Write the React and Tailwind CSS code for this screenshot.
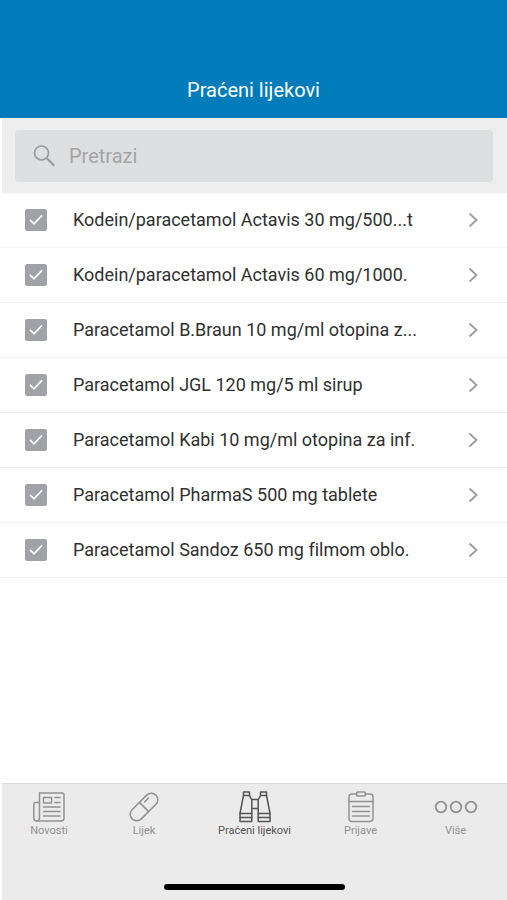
import React, { useState } from "react";

const MEDICINES = [
  "Kodein/paracetamol Actavis 30 mg/500...t",
  "Kodein/paracetamol Actavis 60 mg/1000.",
  "Paracetamol B.Braun 10 mg/ml otopina z...",
  "Paracetamol JGL 120 mg/5 ml sirup",
  "Paracetamol Kabi 10 mg/ml otopina za inf.",
  "Paracetamol PharmaS 500 mg tablete",
  "Paracetamol Sandoz 650 mg filmom oblo.",
];

const stroke = {
  fill: "none",
  stroke: "currentColor",
  strokeWidth: 1.5,
  strokeLinecap: "round",
  strokeLinejoin: "round",
  "aria-hidden": true,
};

function NewsIcon() {
  return (
    <svg className="h-8 w-8" viewBox="0 0 32 32" {...stroke}>
      <path d="M6.500 2h23a1.500 1.500 0 0 1 1.500 1.500V27a3 3 0 0 1-3 3H3.800a3 3 0 0 1-3-3V13a1.500 1.500 0 0 1 1.500-1.500h4.200" />
      <path d="M6.500 2v25a2.800 2.800 0 0 1-2.700 3" />
      <path d="M10.500 6.500h8v5.500h-8z" />
      <path d="M22 6.500h5M22 11.500h5M10.500 16h16.500M10.500 20.500h16.500M10.500 25h16.500" />
    </svg>
  );
}

function PillIcon() {
  return (
    <svg className="h-8 w-8" viewBox="0 0 32 32" {...stroke}>
      <g transform="rotate(-45 16 16)">
        <rect x="-0.800" y="9.500" width="33.600" height="13" rx="6.500" />
        <path d="M16 9.500v13M20 12.800h5.500" />
      </g>
    </svg>
  );
}

function BinocularsIcon() {
  return (
    <svg className="h-8 w-8" viewBox="0 0 32 32" {...stroke}>
      <path d="M4.500 1h6v3.500h-6zM21.500 1h6v3.500h-6z" />
      <path d="M4.500 4.500L3 12 1 22.500V30.500h11.800V9L10.500 4.500" />
      <path d="M27.500 4.500L29 12l2 10.500V30.500H19.200V9l2.300-4.500" />
      <path d="M1 22.500h11.800M19.200 22.500H31M1 26.500h11.800M19.200 26.500H31" />
      <path d="M12.800 8.500h6.400M12.800 17.500h6.400" />
    </svg>
  );
}

function ClipboardIcon() {
  return (
    <svg className="h-8 w-8" viewBox="0 0 32 32" {...stroke}>
      <path d="M12 3H7a3 3 0 0 0-3 3v21.500a3 3 0 0 0 3 3h18a3 3 0 0 0 3-3V6a3 3 0 0 0-3-3h-5" />
      <rect x="11.500" y="1" width="9" height="4" rx="1.500" />
      <path d="M4 10.500h24M7.500 15.500h17M7.500 20.500h17M7.500 25h17" />
    </svg>
  );
}

function MoreIcon() {
  return (
    <svg className="h-8 w-11" viewBox="0 0 44 32" {...stroke} strokeWidth={1.8}>
      <circle cx="7" cy="16" r="5.300" />
      <circle cx="22" cy="16" r="5.300" />
      <circle cx="37" cy="16" r="5.300" />
    </svg>
  );
}

const TABS = [
  { label: "Novosti", Icon: NewsIcon },
  { label: "Lijek", Icon: PillIcon },
  { label: "Praćeni lijekovi", Icon: BinocularsIcon, active: true },
  { label: "Prijave", Icon: ClipboardIcon },
  { label: "Više", Icon: MoreIcon },
];

function MedicineRow({ name }) {
  const [checked, setChecked] = useState(true);
  return (
    <li className="flex h-[55px] items-center border-b border-[#f3f3f3] pr-[29px] pl-[25px]">
      <label className="relative grid size-[22px] shrink-0 place-items-center">
        <input
          type="checkbox"
          aria-label={name}
          checked={checked}
          onChange={(e) => setChecked(e.target.checked)}
          className="peer size-[22px] appearance-none rounded-[2px] border border-[#a1a1a8] checked:bg-[#a1a1a8]"
        />
        <svg
          className="pointer-events-none absolute inset-0 hidden size-[22px] text-white peer-checked:block"
          viewBox="0 0 22 22"
          fill="none"
          stroke="currentColor"
          strokeWidth="1.700"
          aria-hidden="true"
        >
          <path d="M5 10.800l4 4 8-8.500" />
        </svg>
      </label>
      <button type="button" className="flex min-w-0 flex-1 items-center justify-between pl-[26px] text-left">
        <span className="truncate text-[18px] leading-6 text-[#303030] [font-variant-ligatures:none]">{name}</span>
        <svg
          className="h-4 w-[10px] shrink-0 text-[#9b9b9b]"
          viewBox="0 0 10 16"
          fill="none"
          stroke="currentColor"
          strokeWidth="1.800"
          aria-hidden="true"
        >
          <path d="M1.500 1.500L8.500 8l-7 6.500" />
        </svg>
      </button>
    </li>
  );
}

export default function App() {
  return (
    <div className="flex min-h-screen flex-col bg-white font-[Roboto,sans-serif]">
      <header className="bg-[#007cbb] pt-[76px] pb-[14px] text-center text-white">
        <h1 className="text-[20px] leading-7">Praćeni lijekovi</h1>
      </header>

      <main className="flex-1">
        <div className="ml-[2px] bg-[#eeeeee] pt-3 pr-[14px] pb-[11px] pl-[13px]">
          <label className="flex h-[52px] items-center gap-[14px] rounded-[4px] bg-[#dedfe1] pl-[18px]">
            <svg
              className="size-[22px] shrink-0 text-[#9b9b9b]"
              viewBox="0 0 22 22"
              fill="none"
              stroke="currentColor"
              strokeWidth="1.700"
              aria-hidden="true"
            >
              <circle cx="8.500" cy="8" r="7" />
              <path d="M13.300 12.800l8 8" strokeWidth="2.200" />
            </svg>
            <input
              type="search"
              aria-label="Pretrazi"
              placeholder="Pretrazi"
              className="min-w-0 flex-1 bg-transparent text-[20px] leading-7 text-[#303030] outline-none placeholder:text-[#a3a5a5]"
            />
          </label>
        </div>

        <ul>
          {MEDICINES.map((name) => (
            <MedicineRow key={name} name={name} />
          ))}
        </ul>
      </main>

      <nav className="ml-[2px] border-t border-[#dcdcdc] bg-[#ebebeb]">
        <div className="grid grid-cols-[94fr_96fr_125fr_87fr_103fr] pt-[7px]">
          {TABS.map(({ label, Icon, active }) => (
            <button
              key={label}
              type="button"
              aria-current={active ? "page" : undefined}
              className={
                "flex flex-col items-center text-[11px] leading-4 whitespace-nowrap " +
                (active ? "text-[#555555]" : "text-[#929292]")
              }
            >
              <Icon />
              {label}
            </button>
          ))}
        </div>
        <div className="mx-auto mt-[45px] mb-[10px] h-[6px] w-[181px] rounded-full bg-black" />
      </nav>
    </div>
  );
}
